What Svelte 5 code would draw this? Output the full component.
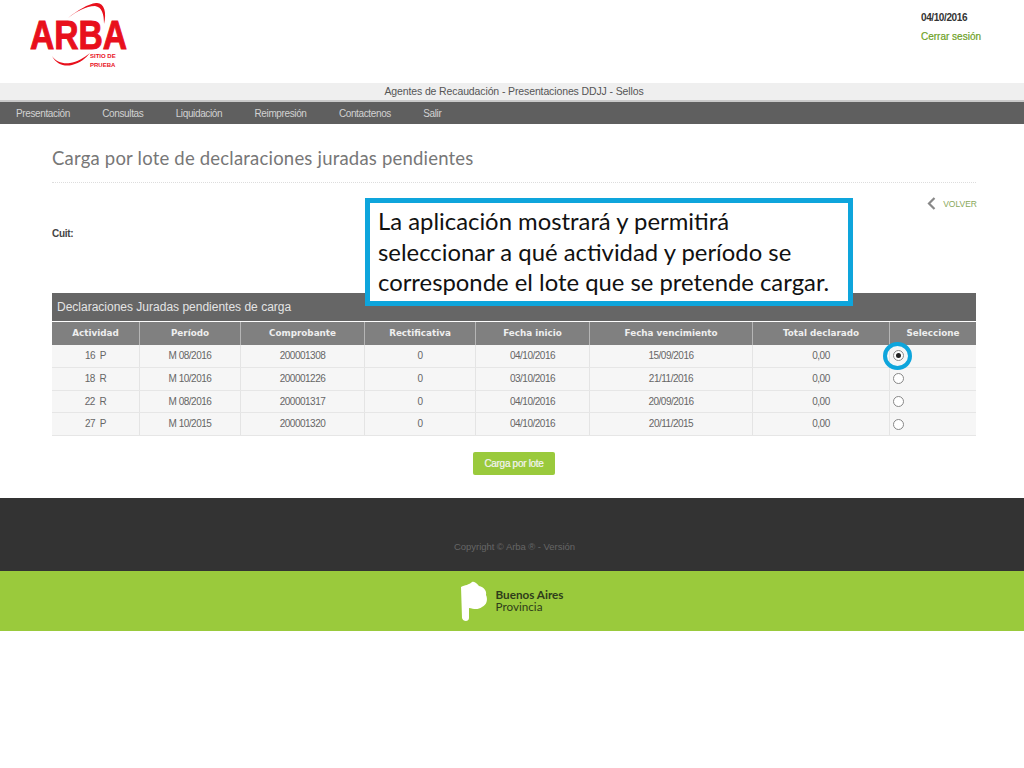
<script>
  const nav = ['Presentación', 'Consultas', 'Liquidación', 'Reimpresión', 'Contactenos', 'Salir'];
  const cols = ['Actividad', 'Período', 'Comprobante', 'Rectificativa', 'Fecha inicio', 'Fecha vencimiento', 'Total declarado', 'Seleccione'];
  const rows = [
    ['16  P', 'M 08/2016', '200001308', '0', '04/10/2016', '15/09/2016', '0,00', true],
    ['18  R', 'M 10/2016', '200001226', '0', '03/10/2016', '21/11/2016', '0,00', false],
    ['22  R', 'M 08/2016', '200001317', '0', '04/10/2016', '20/09/2016', '0,00', false],
    ['27  P', 'M 10/2015', '200001320', '0', '04/10/2016', '20/11/2015', '0,00', false]
  ];
</script>

<div class="page">
  <header class="top">
    <div class="logo">
      <svg class="swoosh" width="100" height="70" viewBox="0 0 100 70" aria-hidden="true">
        <path d="M38 18 C48 10 58 4 66 3 C74 2 77 12 74 24 C74 14 72 7 65 6 C56 6 46 12 38 18 Z" fill="#e8101c"/>
        <path d="M22 56 C26 64 34 67 42 65 C50 63 56 58 60 53 C54 58 47 62 40 63 C33 64 26 62 22 56 Z" fill="#e8101c"/>
      </svg>
      <span class="arba">ARBA</span>
      <span class="sitio">SITIO DE<br />PRUEBA</span>
    </div>
    <div class="session">
      <div class="date">04/10/2016</div>
      <div class="logout">Cerrar sesión</div>
    </div>
  </header>
  <div class="titlebar">Agentes de Recaudación - Presentaciones DDJJ - Sellos</div>
  <nav class="nav">
    {#each nav as item}<span>{item}</span>{/each}
  </nav>
  <main class="main">
    <h1>Carga por lote de declaraciones juradas pendientes</h1>
    <div class="back">
      <svg width="9" height="13" viewBox="0 0 9 13" aria-hidden="true"><path d="M7.5 1 L2 6.5 L7.5 12" fill="none" stroke="#888" stroke-width="2.2"/></svg>
      <span>VOLVER</span>
    </div>
    <div class="cuit">Cuit:</div>
    <section class="panel">
      <h2>Declaraciones Juradas pendientes de carga</h2>
      <div class="grid head">
        {#each cols as c}<div class="cell">{c}</div>{/each}
      </div>
      {#each rows as r}
        <div class="grid row">
          {#each r.slice(0, 7) as v}<div class="cell">{v}</div>{/each}
          <div class="cell pick">
            <span class="radio" class:on={r[7]}>
              {#if r[7]}<span class="ring"></span>{/if}
            </span>
          </div>
        </div>
      {/each}
    </section>
    <div class="actions"><button type="button">Carga por lote</button></div>
    <div class="callout">La aplicación mostrará y permitirá<br />seleccionar a qué actividad y período se<br />corresponde el lote que se pretende cargar.</div>
  </main>
  <footer class="dark">Copyright © Arba ® - Versión</footer>
  <div class="green">
    <svg width="28" height="41" viewBox="0 0 28 41" aria-hidden="true">
      <path d="M1 6 C5 4 9 4 12 1 C15 0 17 3 19 5 C24 6 27 10 26 14 C28 18 27 24 22 26 C18 29 14 28 9 27 L9 37 C9 41 3 41 2 37 Z" fill="#fff"/>
    </svg>
    <div class="ba"><strong>Buenos Aires</strong><span>Provincia</span></div>
  </div>
</div>

<style>
  :global(body) { margin: 0; background: #fff; }
  .page { width: 1024px; height: 768px; overflow: hidden; font-family: "Liberation Sans", Arial, sans-serif; color: #555; }
  .top { height: 83px; display: flex; justify-content: space-between; box-sizing: border-box; padding: 12px 44px 0 30px; }
  .logo { position: relative; width: 100px; height: 70px; margin-top: -12px; }
  .swoosh { position: absolute; left: 0; top: 0; }
  .arba { position: absolute; left: 0; top: 20px; font-size: 41px; line-height: 30px; font-weight: 700; color: #e8101c; -webkit-text-stroke: 1px #e8101c; transform: scale(0.82, 1); transform-origin: left top; white-space: nowrap; }
  .sitio { position: absolute; left: 60px; top: 52px; font-size: 6px; line-height: 8.5px; font-weight: 700; color: #e8101c; }
  .session { width: 59px; font-size: 10px; }
  .date { font-weight: 700; color: #333; line-height: 12px; letter-spacing: -0.4px; }
  .logout { color: #6d9f1f; line-height: 12px; margin-top: 7px; white-space: nowrap; -webkit-text-stroke: 0.2px #6d9f1f; }
  .titlebar { height: 17px; background: #efefef; text-align: center; font-size: 10.5px; line-height: 16px; color: #555; padding-left: 4px; letter-spacing: -0.12px; }
  .nav { height: 22px; margin-top: 2px; background: #5f5f5f; display: flex; padding-left: 16px; font-size: 10px; letter-spacing: -0.37px; line-height: 23px; color: #d2d2d2; gap: 32.3px; box-shadow: 0 -2px 0 #c9c9c9; }
  .main { position: relative; height: 374px; box-sizing: border-box; padding: 0 48px 0 52px; }
  h1 { margin: 0; padding-top: 23px; height: 59px; box-sizing: border-box; border-bottom: 1px dotted #ddd; font-family: Lato, sans-serif; font-size: 18.5px; line-height: 22px; font-weight: 400; color: #777; letter-spacing: 0.2px; }
  .back { position: absolute; right: 47px; top: 73px; display: flex; align-items: center; gap: 7px; font-size: 8.5px; color: #8aa85a; }
  .cuit { height: 110px; box-sizing: border-box; padding-top: 45px; font-size: 10px; font-weight: 700; color: #444; line-height: 12px; letter-spacing: -0.3px; }
  h2 { margin: 0 0 1px; height: 28px; background: #666; color: #e4e4e4; font-size: 12px; font-weight: 400; line-height: 28px; padding-left: 5px; box-sizing: border-box; }
  .grid { display: grid; grid-template-columns: 87px 101px 124px 111px 114px 163px 137px 87px; text-align: center; }
  .head { height: 23px; background: #808080; color: #eee; font-family: "DejaVu Sans", sans-serif; font-weight: 700; font-size: 8.8px; line-height: 23px; }
  .head .cell { border-left: 1px solid #b5b5b5; }
  .head .cell:first-child { border-left: 0; }
  .row { height: 22.75px; background: #f6f6f6; border-bottom: 1px solid #e6e6e6; box-sizing: border-box; font-size: 10px; letter-spacing: -0.5px; line-height: 21px; color: #666; white-space: pre; }
  .row .cell { border-left: 1px solid #e4e4e4; }
  .row .cell:first-child { border-left: 0; }
  .pick { display: flex; align-items: center; padding-left: 3px; }
  .radio { position: relative; width: 9px; height: 9px; border: 1px solid #888; border-radius: 50%; background: #fff; display: block; }
  .radio.on::after { content: ""; position: absolute; left: 2px; top: 2px; width: 5px; height: 5px; border-radius: 50%; background: #222; }
  .ring { position: absolute; left: -11px; top: -9px; width: 21px; height: 20px; border: 4px solid #0ea5dc; border-radius: 50%; }
  .actions { display: flex; justify-content: center; margin-top: 16px; }
  button { width: 82px; height: 23px; border: 0; border-radius: 2px; background: #9aca3c; color: #f4f4f4; font: 400 10px/23px "Liberation Sans", sans-serif; letter-spacing: -0.3px; -webkit-text-stroke: 0.2px #f4f4f4; padding: 0; }
  .callout { position: absolute; left: 365px; top: 74px; width: 488px; height: 108px; box-sizing: border-box; border: 5px solid #0ea5dc; background: #fff; padding: 3px 0 0 8px; font-family: Lato, sans-serif; font-size: 23.85px; line-height: 30.6px; color: #111; white-space: nowrap; }
  .dark { height: 73px; background: #333; color: #666; text-align: center; font-size: 9.5px; line-height: 98px; padding-left: 5px; letter-spacing: -0.05px; box-sizing: border-box; }
  .green { height: 60px; background: #9aca3c; display: flex; align-items: center; justify-content: center; gap: 8px; padding-right: 1px; }
  .ba { display: flex; flex-direction: column; font-family: Lato, sans-serif; font-size: 11.7px; line-height: 12px; color: #2f3d1a; margin-top: -2px; }
  .ba strong { font-weight: 700; }
</style>
